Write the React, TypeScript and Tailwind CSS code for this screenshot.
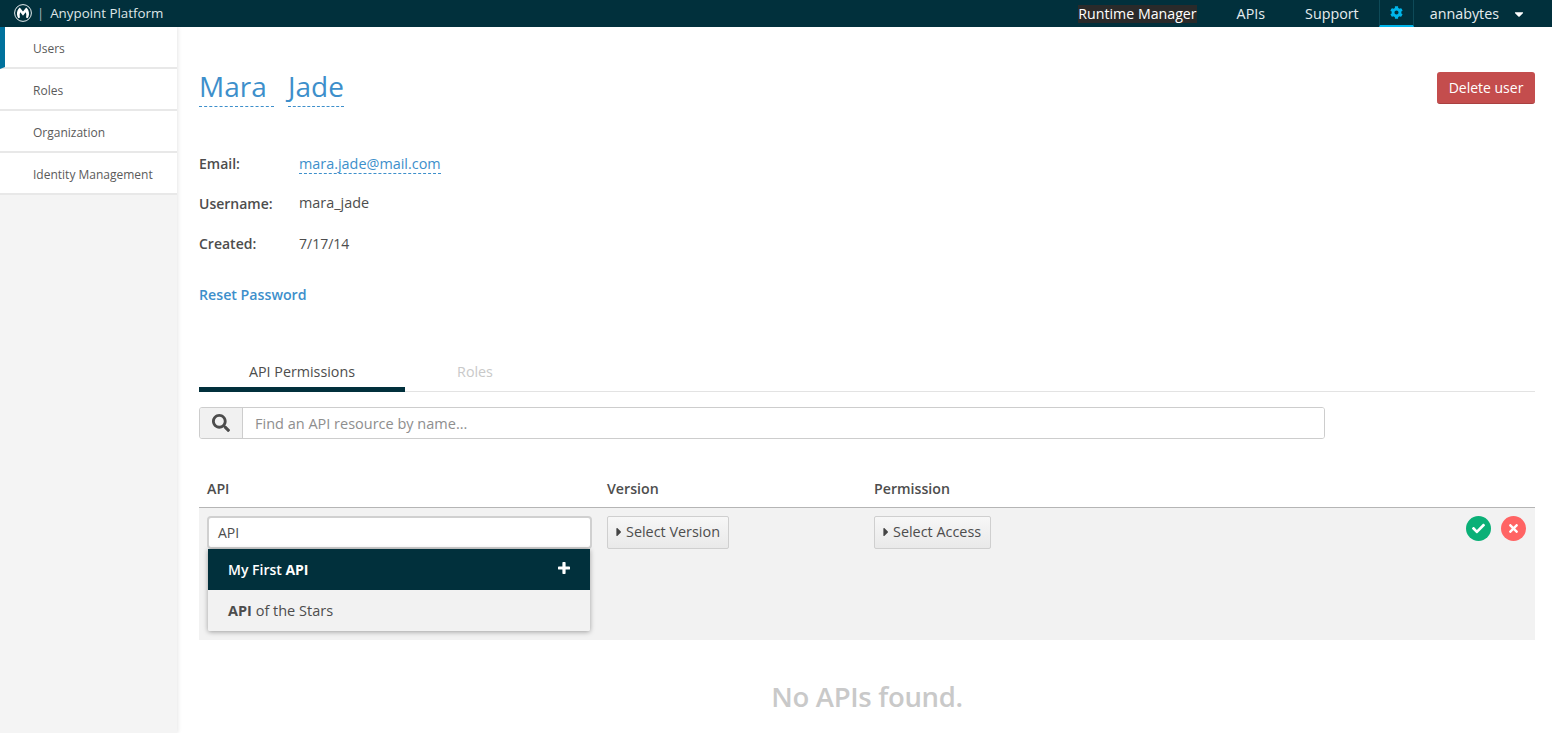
import { FaCog, FaSearch, FaCheck, FaTimes, FaCaretRight, FaCaretDown } from "react-icons/fa";

function Logo() {
  return (
    <svg width="18" height="18" viewBox="0 0 18 18" className="shrink-0">
      <circle cx="9" cy="9" r="8.4" fill="none" stroke="#e8eef0" strokeWidth="1" />
      <path d="M3 10.5C2.8 7.3 4 4.7 5.8 3.4L9 7.6L12.2 3.4C14 4.7 15.2 7.3 15 10.5C14.9 12 14.4 13.2 13.6 14.2L12 13.4C12.5 11.7 12.4 9.8 11.7 8.3L9 11.8L6.3 8.3C5.6 9.8 5.5 11.7 6 13.4L4.4 14.2C3.6 13.2 3.1 12 3 10.5Z" fill="#ffffff" />
    </svg>
  );
}

function Header() {
  return (
    <header className="h-[27px] bg-[#01303c] flex items-center text-[14.3px] text-[#e6ecee] shrink-0">
      <div className="flex items-center pl-[14px]">
        <Logo />
        <span className="ml-[5px] mr-[6px] text-[#a9b9bd] text-[13px] leading-none">|</span>
        <span className="text-[#dfe6e8] text-[13.35px]">Anypoint Platform</span>
      </div>
      <nav className="ml-auto flex items-center h-full">
        <span className="bg-[#2a2a2a] text-white text-[14.2px] h-[18px] leading-[18px] mr-[40px]">Runtime Manager</span>
        <span className="mr-[40px]">APIs</span>
        <span className="mr-[20px]">Support</span>
        <span className="w-[35px] h-full flex items-center justify-center border-x border-[#0e4a58] border-b-2 border-b-[#00b5ea]">
          <FaCog className="text-[#00b5ea] text-[13px]" />
        </span>
        <span className="ml-[16px]">annabytes</span>
        <FaCaretDown className="ml-[13px] mr-[26px] text-white text-[14px]" />
      </nav>
    </header>
  );
}

const sideItems = ["Users", "Roles", "Organization", "Identity Management"];

function Sidebar() {
  return (
    <aside className="w-[177px] shrink-0 bg-[#f4f4f4] shadow-[1px_0_4px_rgba(0,0,0,0.1)]">
      {sideItems.map((t, i) => (
        <div
          key={t}
          className={`h-[42px] pt-[4px] bg-white border-b-2 border-[#e8e8e8] flex items-center text-[12px] text-[#5a5a5a] ${i === 0 ? "border-l-[5px] border-l-[#00719c] pl-[28px]" : "pl-[33px]"}`}
        >
          {t}
        </div>
      ))}
    </aside>
  );
}

function Info({ label, children }: { label: string; children: React.ReactNode }) {
  return (
    <div className="flex h-[40px] items-center text-[14.4px] text-[#4d4d4d]">
      <span className="w-[100px] font-semibold text-[14px]">{label}</span>
      {children}
    </div>
  );
}

function SelectBtn({ label, w }: { label: string; w: string }) {
  return (
    <div className={`h-[33px] pb-[1px] ${w} rounded-[2px] border border-[#cfcfcf] bg-gradient-to-b from-[#f7f7f7] to-[#e9e9e9] flex items-center pl-[4px] text-[14.4px] text-[#4d4d4d]`}>
      <FaCaretRight className="text-[14px] text-[#444]" />
      {label}
    </div>
  );
}

function Main() {
  return (
    <main className="flex-1 pl-[22px] pr-[17px] min-w-0">
      <div className="flex items-start justify-between pt-[45px] h-[112px]">
        <div className="flex gap-[14px] text-[28px] leading-[28px] text-[#3d8fcb]">
          <span className="w-[75px] h-[35px] border-b border-dashed border-[#3d8fcb]">Mara</span>
          <span className="w-[56px] h-[35px] border-b border-dashed border-[#3d8fcb]">Jade</span>
        </div>
        <button className="h-[32px] w-[98px] rounded-[3px] bg-[#c44d4d] border-b border-[#a94040] text-white text-[14px]">Delete user</button>
      </div>

      <div className="pt-[4px]">
        <Info label="Email:">
          <span className="text-[#3d8fcb] border-b border-dashed border-[#3d8fcb] h-[20px] leading-[20px] mt-[1px]">mara.jade@mail.com</span>
        </Info>
        <Info label="Username:"><span>mara_jade</span></Info>
        <Info label="Created:"><span className="text-[14px]">7/17/14</span></Info>
      </div>

      <div className="mt-[22px] text-[14.2px] leading-[20px] font-semibold text-[#3d8fcb]">Reset Password</div>

      <div className="mt-[50px] flex h-[37px] border-b border-[#e3e3e3] text-[14.3px]">
        <div className="w-[206px] h-[37px] border-b-[5px] border-[#01303c] text-[#4d4d4d] text-center pt-[6px]">API Permissions</div>
        <div className="w-[140px] text-center pt-[6px] text-[#c9c9c9]">Roles</div>
      </div>

      <div className="mt-[15px] w-[1126px] h-[32px] flex rounded-[3px] border border-[#cdcdcd] overflow-hidden">
        <div className="w-[43px] bg-[#f1f1f1] border-r border-[#cdcdcd] flex items-center justify-center">
          <FaSearch className="text-[#4d4d4d] text-[18px]" />
        </div>
        <div className="flex-1 flex items-center pl-[12px] pt-[1px] text-[14.5px] text-[#8e8e8e] bg-white">Find an API resource by name...</div>
      </div>

      <div className="mt-[34px] flex h-[35px] border-b border-[#b5b5b5] text-[14.2px] font-semibold text-[#4d4d4d] items-center pb-[3px]">
        <span className="w-[408px] pl-[8px]">API</span>
        <span className="w-[267px]">Version</span>
        <span>Permission</span>
      </div>

      <div className="h-[132px] bg-[#f2f2f2] flex pl-[8px] pt-[8px] pr-[9px]">
        <div className="w-[385px] mr-[15px] relative">
          <div className="h-[33px] rounded-[4px] border-2 border-[#d0d0d0] bg-white flex items-center pl-[9px] pb-[1px] text-[14px] text-[#4d4d4d]">API</div>
          <div className="absolute left-[1px] right-[2px] top-[33px] shadow-[0_1px_5px_rgba(0,0,0,0.35)] rounded-b-[2px] overflow-hidden">
            <div className="h-[41px] bg-[#01303c] text-white flex items-center justify-between pl-[20px] pr-[20px] text-[14px] font-semibold">
              <span>My First <b className="font-bold">API</b></span>
              <svg width="12" height="12" viewBox="0 0 12 12" className="mb-[3px]">
                <path d="M6 1.2V10.8M1.2 6H10.8" stroke="#ffffff" strokeWidth="3.2" strokeLinecap="round" fill="none" />
              </svg>
            </div>
            <div className="h-[41px] bg-[#f2f2f2] text-[#4d4d4d] flex items-center pl-[20px] text-[14.5px]">
              <span><b className="font-bold">API</b> of the Stars</span>
            </div>
          </div>
        </div>
        <div className="w-[267px]"><SelectBtn label="Select Version" w="w-[122px]" /></div>
        <div><SelectBtn label="Select Access" w="w-[117px]" /></div>
        <div className="ml-auto flex gap-[10px]">
          <span className="w-[25px] h-[25px] rounded-full bg-[#0bb077] flex items-center justify-center text-white"><FaCheck className="text-[13px]" /></span>
          <span className="w-[25px] h-[25px] rounded-full bg-[#ff6464] flex items-center justify-center text-white"><FaTimes className="text-[13px]" /></span>
        </div>
      </div>

      <div className="pt-[38px] text-center text-[27.5px] leading-[38px] font-semibold text-[#c9c9c9] tracking-[-0.3px]">No APIs found.</div>
    </main>
  );
}

export default function App() {
  return (
    <div className="h-[733px] overflow-hidden flex flex-col bg-white font-['Open_Sans',sans-serif]">
      <Header />
      <div className="flex flex-1 min-h-0">
        <Sidebar />
        <Main />
      </div>
    </div>
  );
}
